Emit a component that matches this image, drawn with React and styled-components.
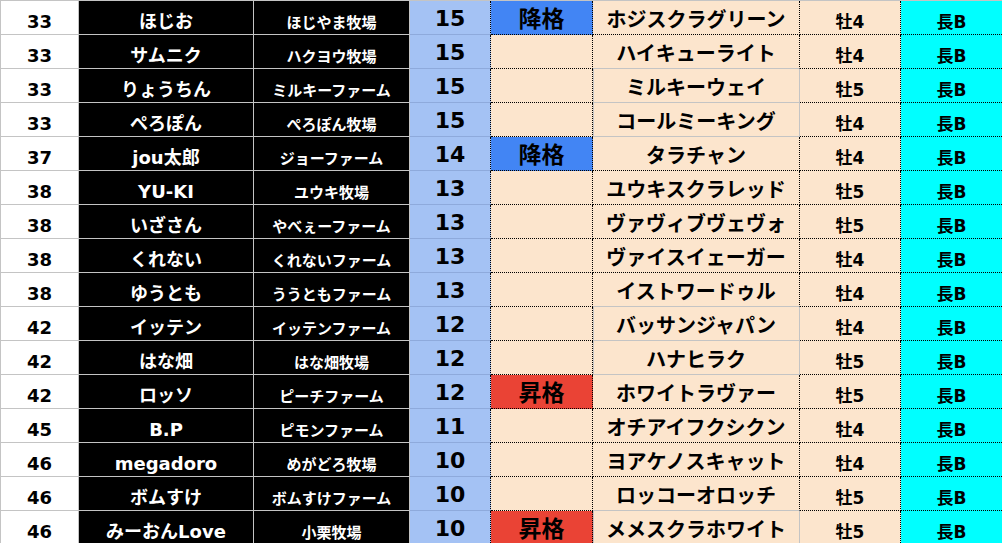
import React from "react";
import styled, { createGlobalStyle } from "styled-components";

const GlobalStyle = createGlobalStyle`
  html, body {
    margin: 0;
    padding: 0;
    background: #ffffff;
  }
  body {
    font-family: "DejaVu Sans", "Noto Sans CJK JP", sans-serif;
  }
`;

const GRID = "#c4c4c4";
const DOT = "1px dotted #000000";
const LINE = `1px solid ${GRID}`;

const Sheet = styled.div`
  width: 1002px;
  height: 543px;
  overflow: hidden;
  border-top: ${LINE};
  border-left: ${LINE};
  box-sizing: border-box;
`;

const Row = styled.div`
  display: grid;
  grid-template-columns: 78px 175px 156px 81px 102px 207px 101px 101px;
  height: 34px;
`;

const Cell = styled.div`
  box-sizing: border-box;
  display: flex;
  align-items: flex-end;
  justify-content: center;
  padding-bottom: 3px;
  white-space: nowrap;
  font-weight: 700;
  line-height: 1;
  border-right: ${LINE};
  border-bottom: ${LINE};
`;

const Rank = styled(Cell)`
  background: #ffffff;
  color: #000000;
  font-size: 18px;
`;

const Name = styled(Cell)`
  background: #000000;
  color: #ffffff;
  font-size: 18px;
`;

const Farm = styled(Cell)`
  background: #000000;
  color: #ffffff;
  font-size: 15px;
`;

const Points = styled(Cell)`
  background: #a4c2f4;
  color: #000000;
  font-size: 22px;
  padding-bottom: 4px;
  border-right: ${DOT};
  border-bottom-color: #8eaadc;
`;

const BADGE = {
  down: "#4285f4",
  up: "#ea4335",
  none: "#fce5cd",
};

const Badge = styled(Cell)`
  background: ${({ $tone }) => BADGE[$tone]};
  color: #000000;
  font-family: "Noto Sans CJK JP", sans-serif;
  font-size: 23px;
  padding-bottom: 5px;
  border-right: ${DOT};
  border-bottom: ${DOT};
`;

// cells without their own dotted frame fall back to the plain grey grid
const Horse = styled(Cell)`
  background: #fce5cd;
  color: #000000;
  font-family: "Noto Sans CJK JP", sans-serif;
  font-size: 20px;
  padding-bottom: 5px;
  border-right: ${({ $plain }) => ($plain ? LINE : DOT)};
  border-bottom: ${({ $plain, $plainBelow }) => ($plain || $plainBelow ? LINE : DOT)};
  box-shadow: ${({ $plain }) => ($plain ? `inset 1px 0 0 ${GRID}` : "none")};
`;

const Sex = styled(Cell)`
  background: #fce5cd;
  color: #000000;
  font-size: 17px;
  border-right: ${DOT};
  border-bottom: ${DOT};
`;

const Grade = styled(Cell)`
  background: #00ffff;
  color: #000000;
  font-size: 17px;
  border-right: none;
  border-bottom: ${DOT};
`;

const rows = [
  ["33", "ほじお", "ほじやま牧場", "15", "down", "ホジスクラグリーン", "牡4"],
  ["33", "サムニク", "ハクヨウ牧場", "15", "none", "ハイキューライト", "牡4"],
  ["33", "りょうちん", "ミルキーファーム", "15", "none", "ミルキーウェイ", "牡5"],
  ["33", "ぺろぽん", "ぺろぽん牧場", "15", "none", "コールミーキング", "牡4"],
  ["37", "jou太郎", "ジョーファーム", "14", "down", "タラチャン", "牡4"],
  ["38", "YU-KI", "ユウキ牧場", "13", "none", "ユウキスクラレッド", "牡5"],
  ["38", "いざさん", "やべぇーファーム", "13", "none", "ヴァヴィブヴェヴォ", "牡5"],
  ["38", "くれない", "くれないファーム", "13", "none", "ヴァイスイェーガー", "牡4"],
  ["38", "ゆうとも", "ううともファーム", "13", "none", "イストワードゥル", "牡4"],
  ["42", "イッテン", "イッテンファーム", "12", "none", "バッサンジャパン", "牡4"],
  ["42", "はな畑", "はな畑牧場", "12", "none", "ハナヒラク", "牡5"],
  ["42", "ロッソ", "ピーチファーム", "12", "up", "ホワイトラヴァー", "牡5"],
  ["45", "B.P", "ピモンファーム", "11", "none", "オチアイフクシクン", "牡4"],
  ["46", "megadoro", "めがどろ牧場", "10", "none", "ヨアケノスキャット", "牡4"],
  ["46", "ボムすけ", "ボムすけファーム", "10", "none", "ロッコーオロッチ", "牡5"],
  ["46", "みーおんLove", "小栗牧場", "10", "up", "メメスクラホワイト", "牡5"],
];

const PLAIN = new Set([2, 3, 9, 10, 15]);
const LABEL = { down: "降格", up: "昇格", none: "" };

export default function App() {
  return (
    <>
      <GlobalStyle />
      <Sheet>
        {rows.map(([rank, name, farm, pts, tone, horse, sex], i) => (
          <Row key={i}>
            <Rank>{rank}</Rank>
            <Name>{name}</Name>
            <Farm>{farm}</Farm>
            <Points>{pts}</Points>
            <Badge $tone={tone}>{LABEL[tone]}</Badge>
            <Horse $plain={PLAIN.has(i)} $plainBelow={PLAIN.has(i + 1)}>
              {horse}
            </Horse>
            <Sex>{sex}</Sex>
            <Grade>長B</Grade>
          </Row>
        ))}
      </Sheet>
    </>
  );
}
